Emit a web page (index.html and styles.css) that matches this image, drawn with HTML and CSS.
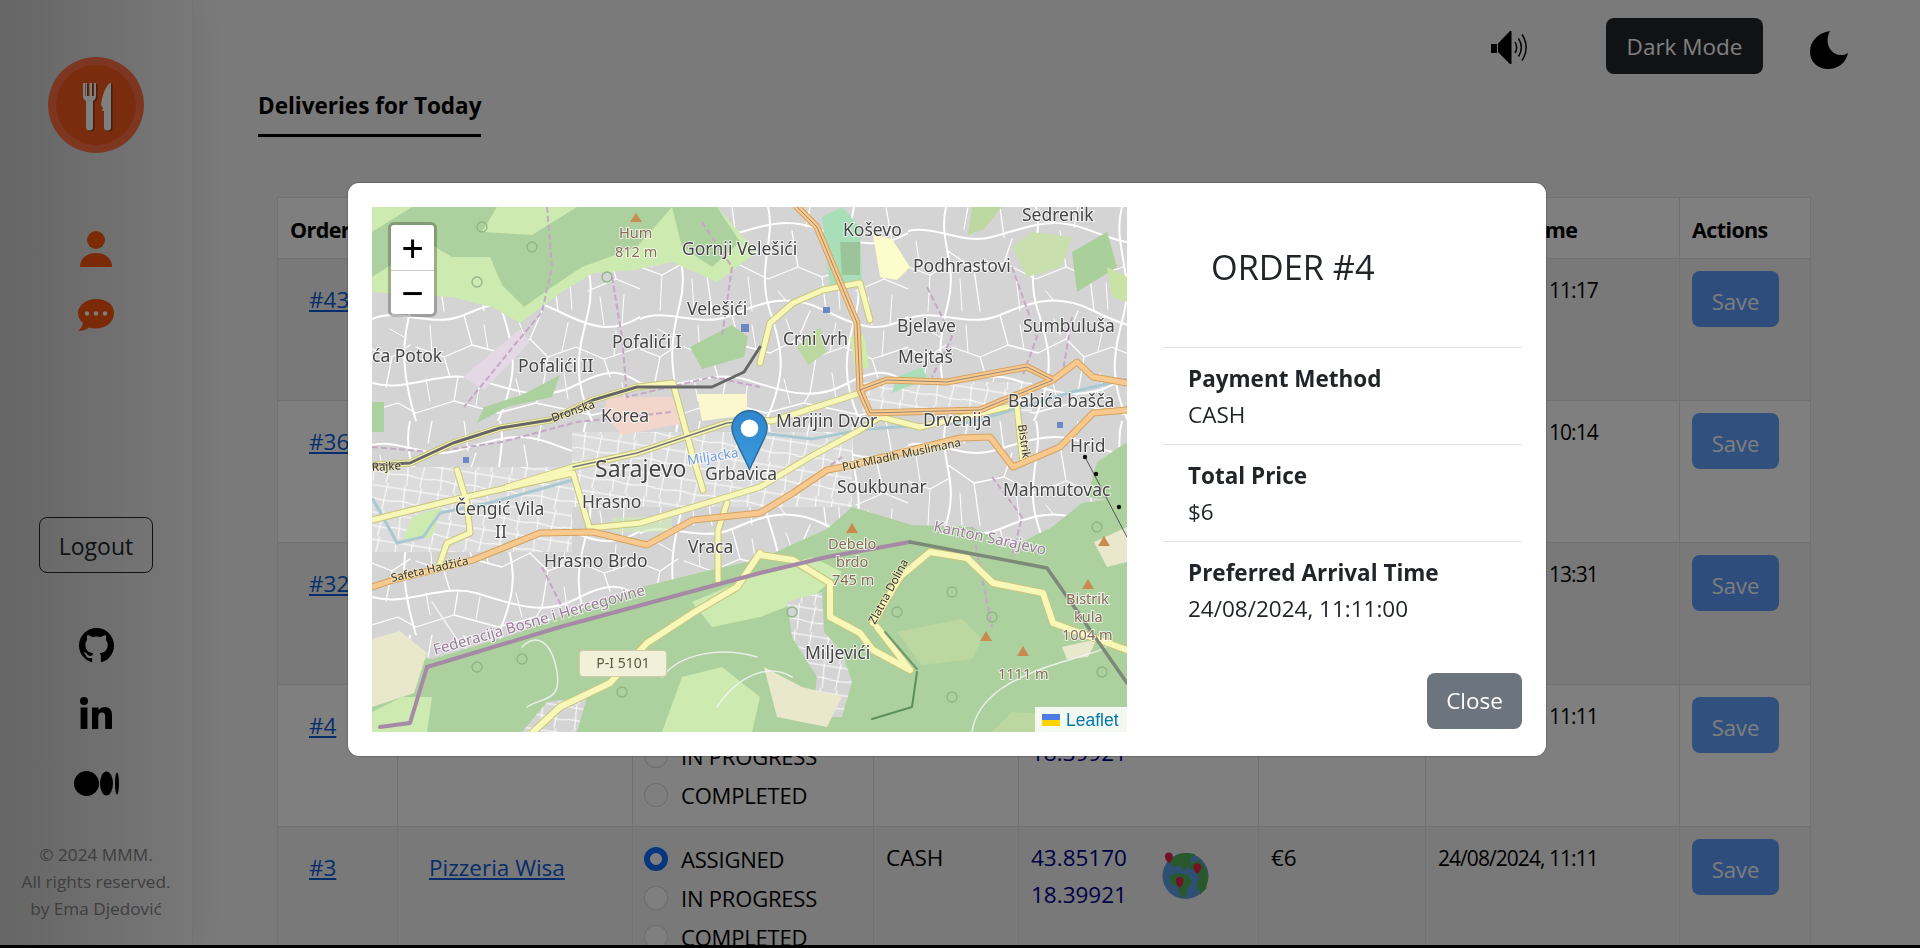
FILE: index.html
```html
<!DOCTYPE html>
<html lang="en">
<head>
<meta charset="utf-8">
<title>Deliveries for Today</title>
<link rel="stylesheet" href="styles.css">
</head>
<body>
<div class="page">
  <aside class="sidebar">
    <svg class="logo" viewBox="0 0 96 96">
      <circle cx="48" cy="48" r="48" fill="#fb6f40"/>
      <circle cx="48" cy="48" r="40" fill="#f4581f"/>
      <path d="M35 26v13c0 3 1.500 4 3 5v26a3.500 3.500 0 0 0 7 0V44c1.500-1 3-2 3-5V26h-2v13h-2V26h-2.500v13H39V26h-1.500v13H37V26z" fill="#8e3a1c" transform="translate(1.500 1)"/>
      <path d="M35 26v13c0 3 1.500 4 3 5v26a3.500 3.500 0 0 0 7 0V44c1.500-1 3-2 3-5V26h-2v13h-2V26h-2.500v13H39V26h-1.500v13H37V26z" fill="#fff"/>
      <path d="M62 26c-5 4-8 13-9 22l2 3-1 3h2v16a3.500 3.500 0 0 0 7 0V26z" fill="#8e3a1c" transform="translate(1.500 1)"/>
      <path d="M62 26c-5 4-8 13-9 22l2 3-1 3h2v16a3.500 3.500 0 0 0 7 0V26z" fill="#fff"/>
    </svg>
    <nav class="side-nav">
      <svg class="side-user" viewBox="0 0 32 36"><circle cx="16" cy="9" r="9"/><path d="M0 36c0-9 7-14 16-14s16 5 16 14z"/></svg>
      <svg class="side-chat" viewBox="0 0 36 32"><path d="M18 0C8 0 0 6.500 0 14c0 4 2 7.500 5 10-.5 3-2.500 6-5 8 4 0 8-1 11-3.500 2 .6 4.500 1 7 1 10 0 18-6.500 18-15.500S28 0 18 0z"/><circle cx="9" cy="14.500" r="2.200" fill="#fff"/><circle cx="18" cy="14.500" r="2.200" fill="#fff"/><circle cx="27" cy="14.500" r="2.200" fill="#fff"/></svg>
    </nav>
    <button class="logout" type="button">Logout</button>
    <div class="socials">
      <svg class="soc-gh" viewBox="0 0 16 16"><path d="M8 0C3.580 0 0 3.580 0 8c0 3.540 2.290 6.530 5.470 7.590.4.070.55-.17.55-.38 0-.19-.01-.82-.01-1.490-2.010.37-2.530-.49-2.690-.94-.09-.23-.48-.94-.82-1.130-.28-.15-.68-.52-.01-.53.63-.01 1.080.58 1.230.82.72 1.210 1.870.87 2.330.66.07-.52.28-.87.51-1.070-1.780-.2-3.640-.89-3.640-3.950 0-.87.31-1.590.82-2.150-.08-.2-.36-1.020.08-2.120 0 0 .67-.21 2.200.82.64-.18 1.320-.27 2-.27s1.360.09 2 .27c1.530-1.040 2.200-.82 2.200-.82.44 1.100.16 1.920.08 2.120.51.56.82 1.270.82 2.150 0 3.070-1.870 3.750-3.650 3.950.29.25.54.73.54 1.480 0 1.070-.01 1.930-.01 2.200 0 .21.15.46.55.38A8.010 8.010 0 0 0 16 8c0-4.420-3.580-8-8-8"/></svg>
      <svg class="soc-in" viewBox="0 0 32 32"><circle cx="4" cy="4" r="4"/><rect x=".6" y="10.500" width="6.800" height="21.500"/><path d="M12 10.500h6.500v3c1.200-2.200 3.500-3.600 6.500-3.600 5.500 0 7 3.600 7 8.600V32h-6.800V20c0-2.800-.6-4.500-3.100-4.500-2.700 0-3.800 1.900-3.800 4.500v12H12z"/></svg>
      <svg class="soc-md" viewBox="0 0 45 25"><circle cx="12.500" cy="12.500" r="12.500"/><ellipse cx="32.500" cy="12.500" rx="6.500" ry="12"/><ellipse cx="43" cy="12.500" rx="2" ry="11"/></svg>
    </div>
    <p class="copy">© 2024 MMM.<br>All rights reserved.<br>by Ema Djedović</p>
  </aside>

  <main class="main">
    <header class="topbar">
      <svg class="speaker" viewBox="0 0 38 33"><path d="M0 13h6v9H0zM7 12.500 19 0h1.500v33H19L7 21z"/><path d="M24 11c2 3.500 2 8 0 11M27.500 7.500c3.500 5.500 3.500 12.500 0 18M31 3.500c5.500 8 5.500 18 0 26" fill="none" stroke="#000" stroke-width="1.500"/></svg>
      <button class="dark-btn" type="button">Dark Mode</button>
      <svg class="moon" viewBox="0 0 38 38"><path d="M20 0C8 2 0 10 0 21c0 10 8 17 18 17 10 0 18-6 20-16-2 1.500-5 2.300-8 2-10-1-16-13-10-24z"/></svg>
    </header>
    <div class="tabs"><span class="tab">Deliveries for Today</span></div>
    <table class="orders">
      <colgroup><col class="c1"><col class="c2"><col class="c3"><col class="c4"><col class="c5"><col class="c6"><col class="c7"><col class="c8"></colgroup>
      <thead>
        <tr><th>Order</th><th>Restaurant</th><th>Status</th><th>Payment</th><th>Location</th><th>Price</th><th>Delivery Time</th><th>Actions</th></tr>
      </thead>
      <tbody>
        <tr>
          <td><a class="cell-link" href="#">#43</a></td><td><a class="cell-link" href="#">Pizzeria Wisa</a></td>
          <td class="status"><label><input type="radio" name="s1" checked>ASSIGNED</label><label><input type="radio" name="s1">IN PROGRESS</label><label><input type="radio" name="s1">COMPLETED</label></td>
          <td class="plain">CASH</td><td><div class="loc"><div class="coords">43.85170<br>18.39921</div></div></td><td class="plain">€6</td><td class="when">24/08/2024, 11:17</td><td><button class="save" type="button" disabled>Save</button></td>
        </tr>
        <tr>
          <td><a class="cell-link" href="#">#36</a></td><td><a class="cell-link" href="#">Pizzeria Wisa</a></td>
          <td class="status"><label><input type="radio" name="s2" checked>ASSIGNED</label><label><input type="radio" name="s2">IN PROGRESS</label><label><input type="radio" name="s2">COMPLETED</label></td>
          <td class="plain">CASH</td><td><div class="loc"><div class="coords">43.85170<br>18.39921</div></div></td><td class="plain">€6</td><td class="when">24/08/2024, 10:14</td><td><button class="save" type="button" disabled>Save</button></td>
        </tr>
        <tr>
          <td><a class="cell-link" href="#">#32</a></td><td><a class="cell-link" href="#">Pizzeria Wisa</a></td>
          <td class="status"><label><input type="radio" name="s3" checked>ASSIGNED</label><label><input type="radio" name="s3">IN PROGRESS</label><label><input type="radio" name="s3">COMPLETED</label></td>
          <td class="plain">CASH</td><td><div class="loc"><div class="coords">43.85170<br>18.39921</div></div></td><td class="plain">€6</td><td class="when">24/08/2024, 13:31</td><td><button class="save" type="button" disabled>Save</button></td>
        </tr>
        <tr>
          <td><a class="cell-link" href="#">#4</a></td><td><a class="cell-link" href="#">Pizzeria Wisa</a></td>
          <td class="status"><label><input type="radio" name="s4" checked>ASSIGNED</label><label><input type="radio" name="s4">IN PROGRESS</label><label><input type="radio" name="s4">COMPLETED</label></td>
          <td class="plain">CASH</td><td><div class="loc"><div class="coords">43.85170<br>18.39921</div></div></td><td class="plain">€6</td><td class="when">24/08/2024, 11:11</td><td><button class="save" type="button" disabled>Save</button></td>
        </tr>
        <tr>
          <td><a class="cell-link" href="#">#3</a></td><td><a class="cell-link" href="#">Pizzeria Wisa</a></td>
          <td class="status"><label><input type="radio" name="s5" checked>ASSIGNED</label><label><input type="radio" name="s5">IN PROGRESS</label><label><input type="radio" name="s5">COMPLETED</label></td>
          <td class="plain">CASH</td>
          <td><div class="loc"><div class="coords">43.85170<br>18.39921</div>
            <svg class="globe" viewBox="0 0 48 48"><circle cx="24" cy="24" r="23.500" fill="#5f9fe6"/><path d="M20 1c-5 1-10 4-13 8l5 6 6-2 4 5 8-6-1-6 5-4c-4-1.500-9-2-14-1zM7 25l8-4 11 2 5 6-5 8-2 9-5-1-3-10-7-3zM29 11l9-3 7 8 2 10-2 11-6 6-4-9 3-9-4-6-7-3z" fill="#4fb358"/><g fill="#e6224c"><path d="M7 0a4 4 0 0 1 4 4C11 7.500 7 11 7 11S3 7.500 3 4a4 4 0 0 1 4-4z"/><path d="M36 11a4 4 0 0 1 4 4c0 3.500-4 7-4 7s-4-3.500-4-7a4 4 0 0 1 4-4z"/><path d="M18 25a4 4 0 0 1 4 4c0 3.500-4 7-4 7s-4-3.500-4-7a4 4 0 0 1 4-4z"/></g></svg></div></td>
          <td class="plain">€6</td><td class="when">24/08/2024, 11:11</td><td><button class="save" type="button" disabled>Save</button></td>
        </tr>
      </tbody>
    </table>
  </main>
</div>

<div class="backdrop"></div>

<section class="modal">
  <div class="map">
    <svg class="map-art" viewBox="0 0 755 525" preserveAspectRatio="none">
      <defs>
        <pattern id="web" width="268" height="214" patternUnits="userSpaceOnUse">
          <g fill="none" stroke="#fff" stroke-linecap="round" stroke-linejoin="round">
            <path stroke-width="2" d="M0 24C30 18 52 38 84 30S140 8 178 22 236 44 268 26M0 112C26 100 60 122 92 108S150 86 186 104 240 126 268 110M0 176C34 186 70 162 104 172S170 196 204 178 250 164 268 176M38 0C30 34 50 58 40 96S28 160 44 214M128 0C136 30 116 62 130 104S146 168 126 214M214 0C204 36 226 66 216 106S200 170 220 214"/>
            <path stroke-width="1.300" d="M0 60L22 68 40 58M40 44L66 62 96 56 104 32M66 62L72 104M96 56L128 72 158 60 182 70 216 60M158 60L152 24M182 70L186 104M216 84L244 72 268 82M244 72L236 38M0 142L20 150 38 138M44 140L72 150 100 138 130 146M72 150L78 170M100 138L92 108M130 146L158 132 170 104M158 132L176 150 204 140 232 152 268 140M176 150L170 186M232 152L238 170M20 150L14 180M0 204L26 196 44 206 82 194 126 206 164 196 220 208 268 198M82 194L86 170M164 196L170 186M60 0L56 22M92 0L96 30M170 0L166 20M246 0L252 34"/>
            <path stroke-width="1" d="M8 34L12 60M22 68L20 104M52 72L54 104M108 70L112 104M138 84L146 94M198 76L200 102M228 90L232 118M252 88L250 118M18 122L32 130M58 118L60 146M112 118L116 142M146 112L152 128M196 116L190 144M244 124L242 150M54 172L58 194M108 176L104 198M144 172L150 196M192 166L196 192M250 176L254 200"/>
          </g>
        </pattern>
        <pattern id="grid" width="34" height="27" patternUnits="userSpaceOnUse" patternTransform="rotate(9)">
          <path d="M0 4H34M0 17C10 14 22 20 34 17M8 0L10 27M25 0L23 27" fill="none" stroke="#fff" stroke-width="1"/>
        </pattern>
        <path id="ry1" d="M0 258L38 256 81 236 128 221 178 213 221 193 265 180 301 176 321 250 331 283M135 280L201 260 265 246 355 216 388 213 400 214 488 186M0 313L81 293 201 266 218 323M218 321L268 316 335 296 388 280 438 250 488 223 508 210 548 220 635 200M85 263L95 296 98 326 75 336 68 356M346 373V323L355 296M645 200L651 256M451 83L488 76 498 113M388 156L398 116 421 96 451 83"/>
        <path id="ry2" d="M388 346L365 380 321 406 275 436 238 476 188 500 161 525M388 348L421 353 458 376 458 410 488 426 501 443 538 463M501 416L528 370 558 345 595 351 621 376 671 386 681 416 755 443M505 420L538 463"/>
        <path id="ro1" d="M0 380L21 373 101 353 168 326 221 325 275 338 321 313 388 306 421 286 455 263 471 260 588 231 618 230 641 260 688 240 721 206 755 203M425 0L445 20 485 116 488 183 498 206 608 203 681 173 655 160 575 175 515 173 488 183M681 173L705 155 721 170 755 176"/>
      </defs>
      <g class="art">
        <rect width="755" height="525" fill="#d4d4d4"/>
        <rect width="755" height="525" fill="url(#web)"/>
        <path d="M200 225H480V300H200ZM0 260H200V345H0ZM490 175H660V205H490Z" fill="#dcdcdc"/>
        <path d="M200 225H480V300H200ZM0 260H200V345H0ZM490 175H660V205H490Z" fill="url(#grid)"/>

        <path d="M0 0H345L385 45 345 75 300 55 262 63 221 66 190 85 148 116 120 100 80 90 0 85Z" fill="#cdebb0"/>
        <path d="M40 0H125L110 25 160 28 205 0H300L265 40 210 60 180 80 152 100 130 78 118 50 80 50 55 35 0 70V25Z" fill="#add19e"/>
        <path d="M300 0H345L368 35 340 60 310 40Z" fill="#add19e"/>
        <path d="M105 216L135 200 180 190 188 168 150 188 112 200Z" fill="#add19e"/>
        <path d="M318 140L360 118 376 130 372 150 330 162Z" fill="#add19e"/>
        <path d="M0 195H12V225H0Z" fill="#add19e"/>
        <path d="M91 170L148 122 158 135 112 183Z" fill="#e5d8e5"/>
        <path d="M235 190H300L312 216 250 228 232 208Z" fill="#f2d5cb"/>
        <path d="M325 187H375V208L330 214Z" fill="#fbf8cf"/>

        <path d="M0 445L60 452 140 428 200 405 270 380 330 365 388 352 455 322 480 300 540 318 600 320 640 340 680 320 710 296 755 290V525H0Z" fill="#add19e"/>
        <path d="M0 432L28 424 55 446 42 486 0 500Z" fill="#e9e8cd"/>
        <path d="M0 525V505L30 490 60 490 55 525Z" fill="#cdebb0"/>
        <path d="M150 525L175 495 215 490 205 525Z" fill="#d4d4d4"/>
        <path d="M150 525L175 495 215 490 205 525Z" fill="url(#grid)"/>
        <path d="M290 525L310 470 350 460 388 490 380 525Z" fill="#cdebb0"/>
        <path d="M320 395L388 366 440 350 470 365 440 390 388 410 340 420Z" fill="#cdebb0"/>
        <path d="M415 395L450 385 452 425 470 445 480 475 470 510 440 510 445 470 420 430Z" fill="#d4d4d4"/>
        <path d="M415 395L450 385 452 425 470 445 480 475 470 510 440 510 445 470 420 430Z" fill="url(#grid)"/>
        <path d="M392 460L430 480 470 490 455 520 405 510Z" fill="#e9e8cd"/>
        <path d="M525 425L590 412 610 432 600 452 550 458Z" fill="#bcd8a0"/>
        <path d="M620 525L640 505 690 508 680 525Z" fill="#bcd8a0"/>
        <path d="M690 440L725 432 716 450 695 452Z" fill="#e9e8cd"/>
        <path d="M722 335L755 320V355L735 360Z" fill="#e9e8cd"/>
        <path d="M640 40L660 25 700 30 690 60 655 70Z" fill="#c9dfae"/>
        <path d="M700 45L735 25 745 60 705 85Z" fill="#a9cf9a"/>
        <path d="M735 60L755 70V95L740 90Z" fill="#c9e3a5"/>
        <path d="M725 255L755 235V295L715 290Z" fill="#add19e"/>
        <path d="M600 0H630L612 22 596 28Z" fill="#bcd8a0"/>
        <path d="M450 10L470 0 488 20 490 75 458 80Z" fill="#a8dfb9"/>
        <path d="M468 35H488V68H470Z" fill="#9cc49a"/>
        <path d="M501 27L520 32 538 60 525 73 508 70Z" fill="#fdfccb"/>
        <path d="M425 140L448 120 455 145 436 158Z" fill="#bcd8a0"/>
        <path d="M525 170L550 160 556 172 520 186Z" fill="#a8dfb9"/>
        <path d="M478 130L492 128 497 160 484 165Z" fill="#cdeca8"/>
        <path d="M40 310L70 300 60 330 30 335Z" fill="#cdebb0"/>
        <path d="M240 310H300V325H240Z" fill="#cdebb0" opacity=".6"/>

        <path d="M0 291L11 310 25 336 51 330 68 306 121 295 201 273M388 226L440 232 495 222 600 215 700 185 755 172" fill="none" stroke="#a9c8d2" stroke-width="3"/>
        <g fill="none" stroke="#c5a8c5" stroke-width="2" stroke-dasharray="6 3"><path d="M175 0L180 60 170 105 145 135 92 200"/><path d="M240 70L250 130 255 190 340 170 388 180"/><path d="M0 240L60 245 130 235 205 215 300 205"/><path d="M330 15L360 60 350 130M555 80L580 130 560 170M640 60L665 130 650 170M700 110L690 170M400 300L470 250M620 270L650 310 640 350M170 360L190 400M600 320L620 420"/></g>

        <g fill="none" stroke-linejoin="round" stroke-linecap="round">
          <path d="M150 440C165 425 180 435 185 465S170 490 155 500M290 470C310 445 350 440 385 450M60 395L90 440M420 470C395 455 365 470 345 500M600 525C605 490 640 470 690 455S725 445 740 435" stroke="#f4f4f4" stroke-width="1.500" opacity=".85"/>
          <use href="#ry1" stroke="#c9c57f" stroke-width="7"/>
          <use href="#ry1" stroke="#f7f7b8" stroke-width="5"/>
          <use href="#ry2" stroke="#c9c57f" stroke-width="8"/>
          <use href="#ry2" stroke="#f7f7b8" stroke-width="6"/>
          <use href="#ro1" stroke="#d5a260" stroke-width="7"/>
          <use href="#ro1" stroke="#f8c98e" stroke-width="5"/>
          <path d="M0 258L38 256 81 236 128 221 178 213 221 193 265 180 301 180 340 180 372 165 388 140" stroke="#666" stroke-width="3"/>
          <path d="M201 260L265 246 355 216 388 213" stroke="#777" stroke-width="1.500"/>
          <path d="M425 0L445 20 485 116 488 183 498 206 608 203 681 173 655 160 575 175 515 173 488 183" stroke="#9a8770" stroke-width="1"/>
          <path d="M55 460L188 420 388 366 455 350 538 335" stroke="#a689a6" stroke-width="4"/>
          <path d="M8 520L38 516 55 460" stroke="#a689a6" stroke-width="4"/>
          <path d="M538 335L675 361 755 476" stroke="#7b8a78" stroke-width="3.500"/>
          <path d="M513 425L545 462" stroke="#6d9a6c" stroke-width="2"/>
          <path d="M500 512L540 500 545 465" stroke="#5e8f5e" stroke-width="2"/>
        </g>
        <path d="M713 250L755 330" stroke="#555" stroke-width="1"/>
        <g fill="#111"><circle cx="713" cy="250" r="2.200"/><circle cx="724" cy="267" r="2.200"/><circle cx="747" cy="300" r="2.200"/></g>
        <g fill="#6b87c4"><rect x="91" y="250" width="6" height="6"/><rect x="369" y="117" width="8" height="8"/><rect x="451" y="100" width="7" height="6"/><rect x="685" y="215" width="6" height="6"/></g>
        <g fill="#c78a4f"><path d="M264 6l6 9h-12zM480 316l6 10h-12zM732 329l6 10h-12zM716 372l6 10h-12zM614 424l6 10h-12zM651 439l6 10h-12z"/></g>
        <g fill="none" stroke="#8fb485" stroke-width="1.300"><circle cx="110" cy="20" r="5"/><circle cx="160" cy="40" r="5"/><circle cx="105" cy="75" r="5"/><circle cx="235" cy="70" r="5"/><circle cx="105" cy="460" r="5"/><circle cx="150" cy="452" r="5"/><circle cx="250" cy="485" r="5"/><circle cx="420" cy="405" r="5"/><circle cx="525" cy="405" r="5"/><circle cx="580" cy="385" r="5"/><circle cx="620" cy="410" r="5"/><circle cx="580" cy="490" r="5"/><circle cx="730" cy="465" r="5"/><circle cx="690" cy="510" r="5"/><circle cx="725" cy="320" r="5"/></g>
      </g>
      <g class="labels">
        <text x="310" y="48">Gornji Velešići</text><text x="315" y="108">Velešići</text><text x="240" y="141">Pofalići I</text><text x="146" y="165">Pofalići II</text><text x="0" y="155">ća Potok</text><text x="229" y="215">Korea</text>
        <text class="big" x="223" y="270">Sarajevo</text><text x="333" y="273">Grbavica</text>
        <text x="471" y="29">Koševo</text><text x="650" y="14">Sedrenik</text><text x="541" y="65">Podhrastovi</text><text x="525" y="125">Bjelave</text><text x="651" y="125">Sumbuluša</text><text x="411" y="138">Crni vrh</text><text x="526" y="156">Mejtaš</text><text x="404" y="220">Marijin Dvor</text><text x="551" y="219">Drvenija</text><text x="636" y="200">Babića bašča</text><text x="698" y="245">Hrid</text>
        <text x="465" y="286">Soukbunar</text><text x="631" y="289">Mahmutovac</text><text x="83" y="308">Čengić Vila</text><text x="123" y="331">II</text><text x="210" y="301">Hrasno</text><text x="316" y="346">Vraca</text><text x="172" y="360">Hrasno Brdo</text><text x="433" y="452">Miljevići</text>
        <g class="peak"><text x="247" y="31">Hum</text><text x="243" y="50">812 m</text><text x="456" y="342">Debelo</text><text x="464" y="360">brdo</text><text x="460" y="378">745 m</text><text x="694" y="397">Bistrik</text><text x="702" y="415">kula</text><text x="690" y="433">1004 m</text><text x="626" y="472">1111 m</text></g>
        <g class="road"><text transform="translate(181 215) rotate(-19)">Dronska</text><text x="0" y="264" transform="rotate(-3 0 264)">Rajke</text><text transform="translate(471 264) rotate(-12)">Put Mladih Muslimana</text><text transform="translate(20 375) rotate(-13)">Safeta Hadžića</text><text transform="translate(503 418) rotate(-62)">Zlatna Dolina</text><text transform="translate(646 218) rotate(82)">Bistrik</text></g>
        <text class="blue" transform="translate(316 258) rotate(-9)">Miljacka</text>
        <g class="purple"><text transform="translate(63 448) rotate(-16)">Federacija Bosne i Hercegovine</text><text transform="translate(561 324) rotate(12)">Kanton Sarajevo</text></g>
        <rect x="208" y="444" width="86" height="25" rx="3" fill="#f1f0d8" stroke="#d0ccaa"/>
        <text class="shield" x="251" y="461">P-I 5101</text>
      </g>
    </svg>
    <svg class="pin" viewBox="0 0 25 41"><defs><linearGradient id="pg" x1="0" y1="0" x2="0" y2="1"><stop offset="0" stop-color="#2e85cb"/><stop offset="1" stop-color="#3d9be0"/></linearGradient></defs><path d="M12.500.5C5.900.5.500 5.800.500 12.500c0 2.400 1 5 1.800 6.700l10.200 21.300 10.200-21.300c.8-1.700 1.800-4.300 1.800-6.700C24.500 5.800 19.100.5 12.500.5z" fill="url(#pg)" stroke="#2e6c97"/><circle cx="12.500" cy="12.500" r="6" fill="#fff"/></svg>
    <div class="zoom-ctl"><span class="zoom-btn">+</span><span class="zoom-btn">−</span></div>
    <div class="attrib"><svg class="flag" viewBox="0 0 18 12"><rect width="18" height="6" fill="#4c7be1"/><rect y="6" width="18" height="6" fill="#ffd500"/></svg><span>Leaflet</span></div>
  </div>
  <div class="info">
    <h2 class="order-title">ORDER #4</h2>
    <ul class="facts">
      <li><strong>Payment Method</strong><span>CASH</span></li>
      <li><strong>Total Price</strong><span>$6</span></li>
      <li><strong>Preferred Arrival Time</strong><span>24/08/2024, 11:11:00</span></li>
    </ul>
    <div class="modal-foot"><button class="close" type="button">Close</button></div>
  </div>
</section>
</body>
</html>
```

FILE: styles.css
```css
* { box-sizing: border-box; }
html, body { margin: 0; height: 100%; overflow: hidden; }
body { font-family: "Open Sans", "Noto Sans", sans-serif; font-size: 22.500px; line-height: 30px; color: #000; background: #f4f4f4; }
.page { display: flex; height: 948px; border-bottom: 3px solid #000; overflow: hidden; }

.sidebar { flex: 0 0 193px; display: flex; flex-direction: column; align-items: center; padding-top: 57px; background: linear-gradient(90deg, #cbcbcb, #f1f1f1); border-right: 1px solid #e6e6e6; box-shadow: 6px 0 24px rgba(0,0,0,.06); }
.logo { width: 96px; height: 96px; display: block; }
.side-nav { display: flex; flex-direction: column; align-items: center; margin-top: 78px; gap: 32px; fill: #f4540f; }
.side-user { width: 32px; height: 36px; display: block; }
.side-chat { width: 36px; height: 32px; display: block; }
.logout { width: 114px; height: 56px; margin-top: 186px; padding: 2px 0 0; font: inherit; font-size: 23px; color: #212529; background: transparent; border: 1px solid #212529; border-radius: 8px; }
.socials { display: flex; flex-direction: column; align-items: center; margin-top: 55px; }
.soc-gh { width: 35px; height: 35px; display: block; }
.soc-in { width: 32px; height: 32px; display: block; margin-top: 34px; }
.soc-md { width: 45px; height: 25px; display: block; margin-top: 42px; }
.copy { margin: 45px 0 0; text-align: center; font-size: 17.200px; line-height: 27px; color: #7d7d7d; }

.main { flex: 1; min-width: 0; padding-left: 65px; }
.topbar { display: flex; align-items: flex-start; justify-content: flex-end; padding: 18px 72px 0 0; height: 74px; }
.speaker { width: 38px; height: 33px; margin: 13px 77px 0 0; }
.dark-btn { width: 157px; height: 56px; padding: 2px 0 0; font: inherit; font-size: 22.500px; color: #fff; background: #212529; border: 0; border-radius: 8px; }
.moon { width: 38px; height: 38px; margin: 13px 0 0 47px; }
.tabs { margin-top: 16px; }
.tab { display: inline-block; padding: 1px 0 13px; font-weight: 700; border-bottom: 3px solid #000; }

.orders { width: 1533px; margin: 60px 0 0 19px; border-collapse: collapse; table-layout: fixed; background: #fff; }
.c1 { width: 120px; } .c2 { width: 235px; } .c3 { width: 241px; } .c4 { width: 145px; } .c5 { width: 240px; } .c6 { width: 167px; } .c7 { width: 254px; } .c8 { width: 131px; }
.orders th, .orders td { border: 1px solid #dee2e6; text-align: left; vertical-align: top; }
.orders th { padding: 17px 12px 13px; font-size: 21.500px; font-weight: 700; letter-spacing: -.6px; white-space: nowrap; }
.orders td { padding: 12px; height: 142px; }
.orders tbody tr:nth-child(odd) td { background: #f2f2f2; }
.cell-link { display: inline-block; padding: 14px 19px 12px; color: #0d5bd7; text-decoration: underline; white-space: nowrap; }
.orders td.status { padding-left: 11px; }
.status label { display: flex; align-items: center; gap: 13px; height: 39px; font-size: 22px; letter-spacing: -.2px; white-space: nowrap; }
.status input { appearance: none; width: 24px; height: 24px; margin: 0; border: 1px solid rgba(0,0,0,.15); border-radius: 50%; background: #fff; flex: none; }
.status input:checked { background: #fff; border: 6px solid #0d6efd; }
.orders td.plain, .orders td.when { padding-top: 16px; }
.when { font-size: 21px; letter-spacing: -.95px; white-space: nowrap; }
.loc { display: flex; gap: 35px; align-items: center; }
.coords { color: #00008b; line-height: 37px; }
.globe { flex: none; width: 47px; height: 48px; }
.save { width: 87px; height: 56px; padding: 3px 0 0; font: inherit; font-size: 22px; color: #fff; background: #0d6efd; border: 0; border-radius: 8px; opacity: .65; }

.backdrop { position: fixed; inset: 0; background: rgba(0,0,0,.5); }
.modal { position: fixed; left: 348px; top: 183px; width: 1198px; height: 573px; display: flex; gap: 36px; padding: 24px; background: #fff; border-radius: 11px; box-shadow: 0 0 0 1px rgba(0,0,0,.15); color: #212529; }
.map { position: relative; flex: 0 0 755px; height: 525px; overflow: hidden; background: #ddd; }
.map-art { display: block; width: 755px; height: 525px; }
.art { filter: blur(.7px); }
.labels { filter: blur(.35px); font-family: "Noto Sans", sans-serif; font-size: 17.500px; fill: #444; paint-order: stroke; stroke: rgba(255,255,255,.75); stroke-width: 2px; }
.labels .big { font-size: 23px; }
.peak { font-size: 14.500px; fill: #866a52; }
.road { font-size: 11.500px; fill: #333; stroke: rgba(250,240,190,.6); }
.blue { font-size: 13.500px; fill: #6e9bd6; }
.purple { font-size: 15px; fill: #9a7a9a; }
.shield { font-size: 14px; text-anchor: middle; fill: #5a5a3c; stroke: none; }
.pin { position: absolute; left: 359px; top: 203px; width: 37px; height: 60px; }
.zoom-ctl { position: absolute; left: 16px; top: 15px; width: 49px; display: flex; flex-direction: column; background: #fff; border: 3px solid rgba(0,0,0,.25); border-radius: 6px; background-clip: padding-box; }
.zoom-btn { display: flex; align-items: center; justify-content: center; height: 45px; font-family: "DejaVu Sans Mono", monospace; font-size: 36px; line-height: 45px; color: #000; }
.zoom-btn + .zoom-btn { border-top: 1px solid #ccc; height: 44px; }
.attrib { position: absolute; right: 0; bottom: 0; width: 92px; height: 25px; display: flex; align-items: center; gap: 6px; padding-left: 7px; background: rgba(255,255,255,.85); font-family: "Liberation Sans", sans-serif; font-size: 17.500px; color: #0078a8; }
.flag { width: 18px; height: 12px; }

.info { flex: 1; display: flex; flex-direction: column; }
.order-title { margin: 0; height: 140px; padding: 42px 0 0 48px; font-size: 34.300px; font-weight: 400; line-height: 36px; }
.facts { margin: 0; padding: 0; list-style: none; }
.facts li { display: flex; flex-direction: column; height: 97px; padding: 13px 0 0 25px; border-top: 1px solid #dee2e6; line-height: 35px; }
.facts strong { font-weight: 700; }
.facts span { margin-top: 1px; }
.modal-foot { display: flex; justify-content: flex-end; margin-top: 35px; }
.close { width: 95px; height: 56px; font: inherit; font-size: 22.500px; color: #fff; background: #6c757d; border: 0; border-radius: 8px; }
```
